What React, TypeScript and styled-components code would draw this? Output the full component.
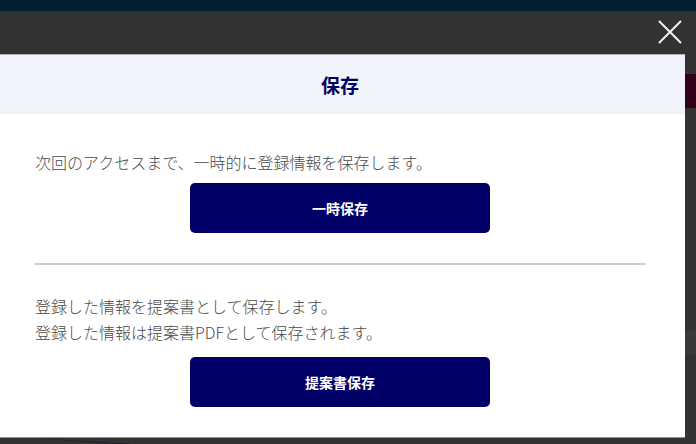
import React from "react";
import styled, { createGlobalStyle } from "styled-components";

const GlobalStyle = createGlobalStyle`
  html, body {
    margin: 0;
    padding: 0;
    background: #323232;
  }
  body {
    font-family: "Noto Sans CJK JP", "Noto Sans", sans-serif;
    -webkit-font-smoothing: antialiased;
  }
`;

const Page = styled.div`
  width: 696px;
  height: 444px;
  overflow: hidden;
  display: flex;
  flex-direction: column;
  background: #323232;
`;

const TopBar = styled.div`
  height: 11px;
  flex: none;
  background: #021f31;
`;

const CloseRow = styled.div`
  height: 43px;
  flex: none;
  display: flex;
  justify-content: flex-end;
  align-items: flex-start;
  box-sizing: border-box;
  padding: 9px 14px 0 0;
`;

const CloseButton = styled.button`
  width: 24px;
  height: 24px;
  padding: 0;
  border: 0;
  background: transparent;
  cursor: pointer;
  display: block;
`;

const ModalRow = styled.div`
  display: flex;
  align-items: flex-start;
`;

const Modal = styled.div`
  width: 690px;
  flex: none;
  margin-left: -5px;
  background: #ffffff;
  border-top: 1px solid #b4b4b4;
  border-bottom: 1px solid #8c8c8c;
`;

const Header = styled.div`
  height: 59px;
  background: #f0f3f9;
  display: flex;
  align-items: center;
  justify-content: center;
`;

const Title = styled.h2`
  margin: 0;
  font-size: 19px;
  line-height: 1;
  font-weight: 700;
  color: #000066;
`;

const Section = styled.div<{ $top: number; $bottom: number; $gap: number }>`
  padding: ${(p) => p.$top}px 40px ${(p) => p.$bottom}px;
  display: flex;
  flex-direction: column;
  gap: ${(p) => p.$gap}px;
`;

const Text = styled.p`
  margin: 0;
  font-size: 16px;
  line-height: 26px;
  font-weight: 300;
  color: #4a4a4a;
`;

const ActionButton = styled.button`
  align-self: center;
  width: 300px;
  height: 50px;
  border: 0;
  border-radius: 5px;
  background: #000066;
  color: #ffffff;
  font-family: inherit;
  font-size: 14px;
  font-weight: 700;
  cursor: pointer;
`;

const Divider = styled.hr`
  margin: 0 40px;
  height: 2px;
  border: 0;
  background: #cccccc;
`;

const SideColumn = styled.div`
  flex: 1;
  display: flex;
  flex-direction: column;
`;

const SideBlock = styled.div<{ $top: number; $height: number; $color: string }>`
  margin-top: ${(p) => p.$top}px;
  height: ${(p) => p.$height}px;
  background: ${(p) => p.$color};
`;

const Footer = styled.div`
  flex: 1;
  display: flex;
  align-items: flex-start;
`;

const CloseIcon = () => (
  <svg width="24" height="24" viewBox="0 0 24 24" aria-hidden="true">
    <path d="M1 1 L23 23 M23 1 L1 23" stroke="#f2f2f2" strokeWidth="2" fill="none" />
  </svg>
);

const Streak = () => (
  <svg width="240" height="7" viewBox="0 0 240 7" aria-hidden="true">
    <path d="M38 0.5 L132 6 L120 6 Z" fill="#0c0c2a" />
  </svg>
);

export default function App() {
  return (
    <>
      <GlobalStyle />
      <Page>
        <TopBar />
        <CloseRow>
          <CloseButton aria-label="閉じる">
            <CloseIcon />
          </CloseButton>
        </CloseRow>
        <ModalRow>
          <Modal>
            <Header>
              <Title>保存</Title>
            </Header>
            <Section $top={35} $bottom={30} $gap={8}>
              <Text>次回のアクセスまで、一時的に登録情報を保存します。</Text>
              <ActionButton>一時保存</ActionButton>
            </Section>
            <Divider />
            <Section $top={28} $bottom={30} $gap={12}>
              <Text>
                登録した情報を提案書として保存します。
                <br />
                登録した情報は提案書PDFとして保存されます。
              </Text>
              <ActionButton>提案書保存</ActionButton>
            </Section>
          </Modal>
          <SideColumn>
            <SideBlock $top={20} $height={34} $color="#33001a" />
            <SideBlock $top={222} $height={24} $color="#393939" />
          </SideColumn>
        </ModalRow>
        <Footer>
          <Streak />
        </Footer>
      </Page>
    </>
  );
}
